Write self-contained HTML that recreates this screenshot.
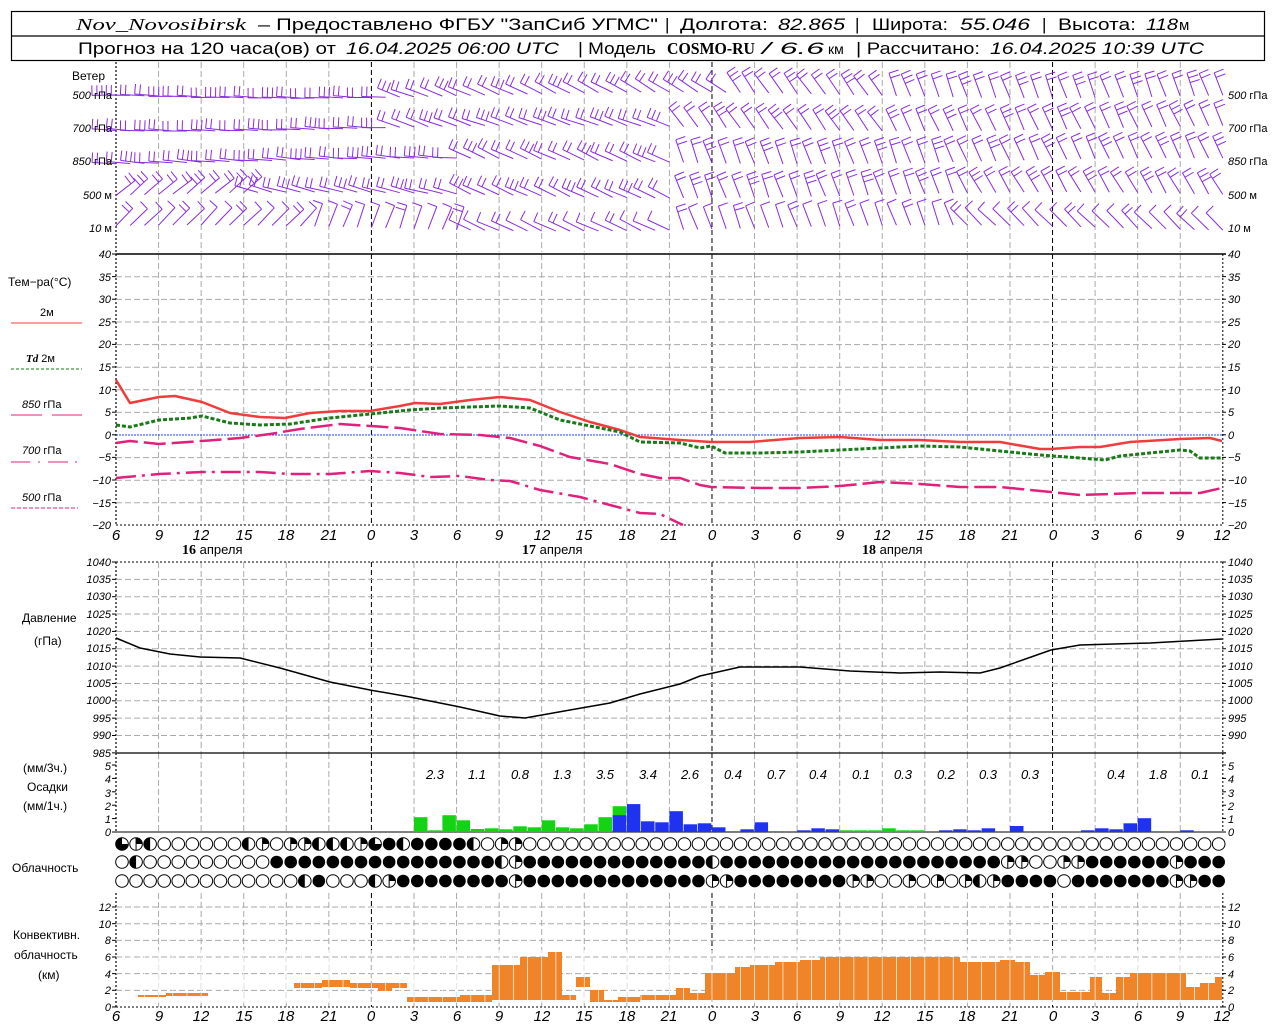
<!DOCTYPE html>
<html><head><meta charset="utf-8"><style>
html,body{margin:0;padding:0;background:#fff;width:1280px;height:1024px;overflow:hidden}
svg{display:block}
text{font-family:"Liberation Sans",sans-serif;fill:#000}
.it{font-style:italic}
.ax{font-size:11px;font-style:italic}
.hx{font-size:15px;font-style:italic}
.lb{font-size:12px}
.pv{font-size:13px;font-style:italic}
</style></head><body>
<svg id="s" width="1280" height="1024" viewBox="0 0 1280 1024" xmlns="http://www.w3.org/2000/svg">
<rect x="0" y="0" width="1280" height="1024" fill="#fff"/>
<g id="grid"></g>
<g id="data"></g>
<!-- header -->
<rect x="11.5" y="11.5" width="1253" height="49" fill="none" stroke="#000" stroke-width="1.2"/>
<line x1="11" y1="36" x2="1265" y2="36" stroke="#000" stroke-width="1.2"/>
<g font-size="17">
<text x="76" y="30" class="it" textLength="170" lengthAdjust="spacingAndGlyphs" style="font-family:'Liberation Serif',serif">Nov_Novosibirsk</text>
<text x="258" y="30" textLength="400" lengthAdjust="spacingAndGlyphs">– Предоставлено ФГБУ "ЗапСиб УГМС"</text>
<text x="665" y="30">|</text>
<text x="680" y="30" textLength="88" lengthAdjust="spacingAndGlyphs">Долгота:</text>
<text x="778" y="30" class="it" textLength="67" lengthAdjust="spacingAndGlyphs">82.865</text>
<text x="855" y="30">|</text>
<text x="872" y="30" textLength="76" lengthAdjust="spacingAndGlyphs">Широта:</text>
<text x="960" y="30" class="it" textLength="70" lengthAdjust="spacingAndGlyphs">55.046</text>
<text x="1042" y="30">|</text>
<text x="1058" y="30" textLength="78" lengthAdjust="spacingAndGlyphs">Высота:</text>
<text x="1146" y="30" class="it" textLength="32" lengthAdjust="spacingAndGlyphs">118</text>
<text x="1179" y="30" font-size="15">м</text>
<text x="78" y="54" textLength="258" lengthAdjust="spacingAndGlyphs">Прогноз на 120 часа(ов) от</text>
<text x="346" y="54" class="it" textLength="213" lengthAdjust="spacingAndGlyphs">16.04.2025 06:00 UTC</text>
<text x="578" y="54" textLength="78" lengthAdjust="spacingAndGlyphs">| Модель</text>
<text x="667" y="54" font-weight="bold" textLength="88" lengthAdjust="spacingAndGlyphs" style="font-family:'Liberation Serif',serif">COSMO-RU</text>
<text x="762" y="54" class="it" textLength="62" lengthAdjust="spacingAndGlyphs">/ 6.6</text>
<text x="828" y="54" font-size="14">км</text>
<text x="856" y="54" textLength="124" lengthAdjust="spacingAndGlyphs">| Рассчитано:</text>
<text x="990" y="54" class="it" textLength="214" lengthAdjust="spacingAndGlyphs">16.04.2025 10:39 UTC</text>
</g>
<!-- wind labels -->
<g class="lb">
<text x="72" y="80">Ветер</text>
<text x="112" y="99" text-anchor="end" font-size="11"><tspan class="it">500</tspan> гПа</text>
<text x="112" y="132" text-anchor="end" font-size="11"><tspan class="it">700</tspan> гПа</text>
<text x="112" y="165" text-anchor="end" font-size="11"><tspan class="it">850</tspan> гПа</text>
<text x="112" y="199" text-anchor="end" font-size="11"><tspan class="it">500</tspan>  м</text>
<text x="112" y="232" text-anchor="end" font-size="11"><tspan class="it">10</tspan>    м</text>
<text x="1228" y="99" font-size="11"><tspan class="it">500</tspan> гПа</text>
<text x="1228" y="132" font-size="11"><tspan class="it">700</tspan> гПа</text>
<text x="1228" y="165" font-size="11"><tspan class="it">850</tspan> гПа</text>
<text x="1228" y="199" font-size="11"><tspan class="it">500</tspan>  м</text>
<text x="1228" y="232" font-size="11"><tspan class="it">10</tspan>    м</text>
</g>
<!-- temp legend -->
<g class="lb">
<text x="8" y="286">Тем−ра(°С)</text>
<text x="40" y="316" font-size="11">2м</text>
<line x1="11" y1="323" x2="82" y2="323" stroke="#f04040" stroke-width="1"/>
<text x="26" y="362" font-size="11"><tspan class="it" font-weight="bold" style="font-family:'Liberation Serif',serif">Td</tspan>   2м</text>
<line x1="11" y1="369" x2="82" y2="369" stroke="#1a7a1a" stroke-width="1" stroke-dasharray="3,2"/>
<text x="22" y="408" font-size="11"><tspan class="it">850</tspan>  гПа</text>
<line x1="11" y1="415" x2="42" y2="415" stroke="#e0207a"/><line x1="52" y1="415" x2="82" y2="415" stroke="#e0207a"/>
<text x="22" y="454" font-size="11"><tspan class="it">700</tspan>  гПа</text>
<line x1="11" y1="462" x2="30" y2="462" stroke="#e0207a"/><line x1="38" y1="462" x2="40" y2="462" stroke="#e0207a"/><line x1="48" y1="462" x2="68" y2="462" stroke="#e0207a"/><line x1="75" y1="462" x2="77" y2="462" stroke="#e0207a"/>
<text x="22" y="501" font-size="11"><tspan class="it">500</tspan>  гПа</text>
<line x1="11" y1="508" x2="78" y2="508" stroke="#e0207a" stroke-dasharray="4,2"/>
</g>
<!-- temp axis labels -->
<g class="ax" text-anchor="end">
<text x="111" y="258">40</text><text x="111" y="281">35</text><text x="111" y="303">30</text><text x="111" y="326">25</text><text x="111" y="348">20</text><text x="111" y="371">15</text><text x="111" y="394">10</text><text x="111" y="416">5</text><text x="111" y="439">0</text><text x="111" y="461">−5</text><text x="111" y="484">−10</text><text x="111" y="507">−15</text><text x="111" y="529">−20</text>
</g>
<g class="ax">
<text x="1228" y="258">40</text><text x="1228" y="281">35</text><text x="1228" y="303">30</text><text x="1228" y="326">25</text><text x="1228" y="348">20</text><text x="1228" y="371">15</text><text x="1228" y="394">10</text><text x="1228" y="416">5</text><text x="1228" y="439">0</text><text x="1228" y="461">−5</text><text x="1228" y="484">−10</text><text x="1228" y="507">−15</text><text x="1228" y="529">−20</text>
</g>
<g class="hx" text-anchor="middle">
<text x="116" y="540">6</text><text x="159" y="540">9</text><text x="201" y="540">12</text><text x="244" y="540">15</text><text x="286" y="540">18</text><text x="329" y="540">21</text><text x="371" y="540">0</text><text x="414" y="540">3</text><text x="457" y="540">6</text><text x="499" y="540">9</text><text x="542" y="540">12</text><text x="584" y="540">15</text><text x="627" y="540">18</text><text x="669" y="540">21</text><text x="712" y="540">0</text><text x="755" y="540">3</text><text x="797" y="540">6</text><text x="840" y="540">9</text><text x="882" y="540">12</text><text x="925" y="540">15</text><text x="967" y="540">18</text><text x="1010" y="540">21</text><text x="1053" y="540">0</text><text x="1095" y="540">3</text><text x="1138" y="540">6</text><text x="1180" y="540">9</text><text x="1222" y="540">12</text>
</g>
<g font-size="13">
<text x="182" y="554"><tspan font-weight="bold" font-size="14" style="font-family:'Liberation Serif',serif">16</tspan> апреля</text>
<text x="522" y="554"><tspan font-weight="bold" font-size="14" style="font-family:'Liberation Serif',serif">17</tspan> апреля</text>
<text x="862" y="554"><tspan font-weight="bold" font-size="14" style="font-family:'Liberation Serif',serif">18</tspan> апреля</text>
</g>
<g class="lb"><text x="22" y="622">Давление</text><text x="34" y="645">(гПа)</text></g>
<g class="ax" font-size="10" text-anchor="end">
<text x="111" y="566">1040</text><text x="111" y="583">1035</text><text x="111" y="600">1030</text><text x="111" y="618">1025</text><text x="111" y="635">1020</text><text x="111" y="652">1015</text><text x="111" y="670">1010</text><text x="111" y="687">1005</text><text x="111" y="704">1000</text><text x="111" y="722">995</text><text x="111" y="739">990</text><text x="111" y="757">985</text>
</g>
<g class="ax" font-size="10">
<text x="1228" y="566">1040</text><text x="1228" y="583">1035</text><text x="1228" y="600">1030</text><text x="1228" y="618">1025</text><text x="1228" y="635">1020</text><text x="1228" y="652">1015</text><text x="1228" y="670">1010</text><text x="1228" y="687">1005</text><text x="1228" y="704">1000</text><text x="1228" y="722">995</text><text x="1228" y="739">990</text>
</g>
<g class="lb"><text x="23" y="772">(мм/3ч.)</text><text x="27" y="791">Осадки</text><text x="23" y="810">(мм/1ч.)</text></g>
<g class="ax" font-size="10" text-anchor="end">
<text x="111" y="770">5</text><text x="111" y="783">4</text><text x="111" y="797">3</text><text x="111" y="810">2</text><text x="111" y="823">1</text><text x="111" y="836">0</text>
</g>
<g class="ax" font-size="10">
<text x="1228" y="770">5</text><text x="1228" y="783">4</text><text x="1228" y="797">3</text><text x="1228" y="810">2</text><text x="1228" y="823">1</text><text x="1228" y="836">0</text>
</g>
<g class="pv" text-anchor="middle">
<text x="435" y="779">2.3</text><text x="477" y="779">1.1</text><text x="520" y="779">0.8</text><text x="562" y="779">1.3</text><text x="605" y="779">3.5</text><text x="648" y="779">3.4</text><text x="690" y="779">2.6</text><text x="733" y="779">0.4</text><text x="776" y="779">0.7</text><text x="818" y="779">0.4</text><text x="861" y="779">0.1</text><text x="903" y="779">0.3</text><text x="946" y="779">0.2</text><text x="988" y="779">0.3</text><text x="1030" y="779">0.3</text><text x="1116" y="779">0.4</text><text x="1158" y="779">1.8</text><text x="1200" y="779">0.1</text>
</g>
<text x="12" y="872" class="lb">Облачность</text>
<g class="lb"><text x="13" y="939">Конвективн.</text><text x="14" y="959">облачность</text><text x="38" y="979">(км)</text></g>
<g class="ax" font-size="10" text-anchor="end">
<text x="111" y="911">12</text><text x="111" y="928">10</text><text x="111" y="944">8</text><text x="111" y="961">6</text><text x="111" y="978">4</text><text x="111" y="994">2</text><text x="111" y="1011">0</text>
</g>
<g class="ax" font-size="10">
<text x="1228" y="911">12</text><text x="1228" y="928">10</text><text x="1228" y="944">8</text><text x="1228" y="961">6</text><text x="1228" y="978">4</text><text x="1228" y="994">2</text><text x="1228" y="1011">0</text>
</g>
<g class="hx" text-anchor="middle">
<text x="116" y="1021">6</text><text x="159" y="1021">9</text><text x="201" y="1021">12</text><text x="244" y="1021">15</text><text x="286" y="1021">18</text><text x="329" y="1021">21</text><text x="371" y="1021">0</text><text x="414" y="1021">3</text><text x="457" y="1021">6</text><text x="499" y="1021">9</text><text x="542" y="1021">12</text><text x="584" y="1021">15</text><text x="627" y="1021">18</text><text x="669" y="1021">21</text><text x="712" y="1021">0</text><text x="755" y="1021">3</text><text x="797" y="1021">6</text><text x="840" y="1021">9</text><text x="882" y="1021">12</text><text x="925" y="1021">15</text><text x="967" y="1021">18</text><text x="1010" y="1021">21</text><text x="1053" y="1021">0</text><text x="1095" y="1021">3</text><text x="1138" y="1021">6</text><text x="1180" y="1021">9</text><text x="1222" y="1021">12</text>
</g>
</svg>
<script>
(function(){
var NS="http://www.w3.org/2000/svg",G=document.getElementById('grid'),D=document.getElementById('data');
function el(p,t,a){var e=document.createElementNS(NS,t);for(var k in a)e.setAttribute(k,a[k]);p.appendChild(e);return e;}
var X0=116,PH=14.19,X1=1222;
function ln(p,x1,y1,x2,y2,c,w,da){var a={x1:x1,y1:y1,x2:x2,y2:y2,stroke:c,'stroke-width':w||1};if(da)a['stroke-dasharray']=da;return el(p,'line',a);}
var panels=[[62,252],[254,525],[562,753],[753,832],[893,1007]];
panels.forEach(function(p,pi){
 for(var k=0;k<=26;k++){var x=X0+k*3*PH;var isDay=(k==6||k==14||k==22);
  if(k==0){ln(G,x,p[0],x,p[1],'#000',1.2,'2,2');continue;}
  if(k==26){ if(pi>0) ln(G,x,p[0],x,p[1],'#000',1,'2,2'); continue;}
  ln(G,x,p[0],x,p[1],isDay?'#000':'#aaa',1,isDay?'5,3':'6,3');}
});
for(var v=35;v>=-15;v-=5){var y=435-(v)*4.52; if(v==0)continue; ln(G,X0,y,X1,y,'#aaa',1,'6,3');}
ln(G,X0,435,X1,435,'#2040ff',1,'2,1');
ln(G,X0,254,X1+4,254,'#000',1.5);ln(G,X0,525,X1,525,'#000',1,'2,2');
for(var p=1035;p>985;p-=5){var y=562+(1040-p)*3.47;ln(G,X0,y,X1,y,'#aaa',1,'6,3');}
ln(G,X0,562,X1,562,'#000',1,'2,2');ln(G,X0,753,X1+4,753,'#000',1.2);
ln(G,X0,832,X1,832,'#000',1);
for(var k=2;k<=12;k+=2){var y=1007-k*8.33;ln(G,X0,y,X1,y,'#aaa',1,'6,3');}
ln(G,X0,1007,X1,1007,'#000',1,'2,2');
function ticks(y0,y1,st){for(var y=y0;y<=y1+0.1;y+=st){ln(G,X0-4,y,X0,y,'#000',1);ln(G,X1,y,X1+4,y,'#000',1);}}
ticks(254,525,22.6);ticks(562,753,17.35);ticks(765,832,13.4);ticks(907,1007,16.66);
function pl(pts,c,w,da){var s=pts.map(function(p){return p.join(',')}).join(' ');var a={points:s,fill:'none',stroke:c,'stroke-width':w,'stroke-linejoin':'round'};if(da)a['stroke-dasharray']=da;el(D,'polyline',a);}
pl([[116,380],[130,403],[159,397],[175,396],[202,402],[230,413],[260,417],[285,418],[310,413],[340,411],[370,411],[400,406],[415,403],[440,404],[470,400],[500,397],[530,400],[560,412],[590,422],[620,430],[640,437],[680,440],[711,442],[750,442],[800,438],[840,437],[880,440],[920,440],[960,442],[1000,442],[1040,449],[1051,449],[1080,447],[1100,447],[1130,442],[1180,439],[1210,438],[1222,441]],'#f03c3c',2.5);
pl([[116,425],[130,427],[159,420],[190,418],[202,416],[230,423],[260,425],[290,424],[330,418],[370,414],[410,410],[440,408],[470,407],[500,406],[530,408],[560,420],[590,426],[620,432],[640,442],[680,443],[700,448],[711,446],[725,453],[760,453],[800,452],[840,450],[880,448],[920,446],[960,447],[1000,451],[1040,455],[1080,458],[1105,460],[1120,456],[1180,450],[1190,451],[1200,458],[1222,458]],'#1a7a1a',3,'4,2');
pl([[116,443],[130,441],[159,444],[202,441],[240,438],[270,434],[300,429],[340,424],[370,426],[400,428],[440,434],[480,435],[510,438],[540,446],[570,457],[610,464],[640,474],[660,478],[680,478],[700,485],[711,487],[760,488],[800,488],[840,486],[880,482],[920,484],[960,487],[1000,487],[1051,492],[1080,495],[1110,494],[1140,493],[1200,493],[1222,488]],'#e0207a',2.5,'22,6');
pl([[116,478],[159,474],[202,472],[260,472],[290,474],[330,474],[370,471],[400,473],[430,477],[460,476],[490,480],[510,481],[540,490],[580,497],[610,505],[640,513],[660,514],[683,525]],'#e0207a',2.5,'20,6,3,6');
pl([[116,638],[140,648],[170,654],[200,657],[240,658],[280,668],[330,682],[370,690],[410,697],[460,707],[500,716],[525,718],[570,710],[610,703],[640,694],[680,684],[700,676],[740,667],[800,667],[850,671],[900,673],[940,672],[980,673],[1000,668],[1051,650],[1080,645],[1150,643],[1222,639]],'#000',1.5);
var g=[14.8,1.7,16.8,11.7,3,3.7,2.7,5.7,4.7,11.7,4.7,3.7,7.7,14.8,25.8];
g.forEach(function(h,i){var x=414+i*PH;el(D,'rect',{x:x,y:832-h,width:13.5,height:h,fill:'#14d214'});});
el(D,'rect',{x:414+14*PH,y:832-16.8,width:13.5,height:16.8,fill:'#1e32f0'});
var b={15:27.9,16:10.7,17:9.7,18:20.8,19:7.7,20:8.7,21:4.7,22:0.7,23:2.7,24:9.7,25:0.7,27:1.7,28:3.7,29:2.7,35:1,37:1.7,38:2.7,39:1.7,40:3.7,42:6,47:1.7,48:3.7,49:2.7,50:8.7,51:13.8,52:0.7,54:1.7};
for(var i in b){var x=414+i*PH;el(D,'rect',{x:x,y:832-b[i],width:13.5,height:b[i],fill:'#1e32f0'});}
var gg={30:1.7,31:1.7,32:1.7,33:3.7,34:1.7,35:1.7};
for(var i in gg){var x=414+i*PH;el(D,'rect',{x:x,y:832-gg[i],width:13.5,height:gg[i],fill:'#14d214'});}
var r1="31200000021011222134244442"+"0110"; r1=r1+Array(80).join('0');
var r2="02000000000"+"4444444444444444"+"21"+"4444444444444"+"2"+"44444444444444444444"+"1100114444441444";
var r3="0000000000000240002144444444"+"1"+"4444444444444"+"11"+"44444444"+"11001010121"+"4444"+"0"+"4444444"+"11"+"444"+"1"+"4444";
var rows=[[r1,844],[r2,862],[r3,881]];
rows.forEach(function(R){var s=R[0],y=R[1];
 for(var i=0;i<79;i++){var cx=122+i*14.06,r=6.3,t=+(s[i]||0);
  if(t==4){el(D,'circle',{cx:cx,cy:y,r:r,fill:'#000'});continue;}
  el(D,'circle',{cx:cx,cy:y,r:r,fill:'#fff',stroke:'#000','stroke-width':1});
  if(t==2){el(D,'path',{d:'M'+cx+','+(y-r)+' A'+r+','+r+' 0 0 0 '+cx+','+(y+r)+' Z',fill:'#000'});}
  if(t==1){el(D,'path',{d:'M'+cx+','+y+' L'+cx+','+(y-r)+' A'+r+','+r+' 0 0 1 '+(cx+r)+','+y+' Z',fill:'#000'});ln(D,cx,y-r,cx,y+r,'#000',1);}
  if(t==3){el(D,'path',{d:'M'+cx+','+y+' L'+cx+','+(y-r)+' A'+r+','+r+' 0 1 0 '+(cx+r)+','+y+' Z',fill:'#000'});}
 }});
var cv=[[138,166,995,997],[166,208,993,996],[294,322,983,988],[322,350,980,987],[350,378,983,988],[378,392,983,991],[392,407,983,988],[407,460,997,1002],[460,492,995,1002],[492,520,965,1000],[520,548,957,1000],[548,562,952,1000],[562,576,995,1000],[576,590,977,987],[590,604,990,1002],[604,618,1000,1002],[618,640,997,1002],[640,676,995,1000],[676,690,988,1000],[690,705,993,1000],[705,735,973,1000],[735,750,967,1000],[750,775,965,1000],[775,800,962,1000],[800,820,960,1000],[820,960,957,1000],[960,1000,962,1000],[1000,1015,960,1000],[1015,1030,962,1000],[1030,1045,975,1000],[1045,1060,972,1000],[1060,1090,992,1000],[1090,1102,977,1000],[1102,1116,993,1000],[1116,1130,977,1000],[1130,1186,973,1000],[1186,1200,987,1000],[1200,1215,983,1000],[1215,1222,977,1000]];
cv.forEach(function(c){el(D,'rect',{x:c[0],y:c[2],width:c[1]-c[0],height:c[3]-c[2],fill:'#f08428'});});
for(var x=X0+14.19;x<X1;x+=14.19){ln(D,x,950,x,1003,'#fff',0.7);}
// wind barbs
var levels=[95,128,161,195,228];
function ang(L,i){var base;
 if(L==0){base=i<20?182:i<44?200+(i-20)*0.6:i<55?235:250;}
 else if(L==1){base=i<20?183:i<40?200:i<55?235:245;}
 else if(L==2){base=i<25?185:i<40?205:i<60?250:245;}
 else if(L==3){base=i<10?320:i<25?195:i<40?205:i<60?250:240;}
 else {base=i<14?315:i<25?290:i<40?205:i<60?250:225;}
 return (base+((i*37+L*11)%7-3))*Math.PI/180;}
function spd(L,i){return [2,2,2,2,1][L]+((i+L)%4==0?1:0);}
var P='#8a2be2';
levels.forEach(function(y0,L){
 for(var i=0;i<79;i++){var x=X0+i*PH;var a=ang(L,i),dx=Math.cos(a),dy=Math.sin(a),len=24;
  var y=y0+Math.sin(i*0.12+L)*3;
  var tx=x+dx*len,ty=y+dy*len;ln(D,x,y,tx,ty,P,1);
  var fx=-dy,fy=dx; if(fy>0){fx=-fx;fy=-fy;}
  var n=spd(L,i);
  for(var k=0;k<n;k++){var sx=tx-dx*k*5,sy=ty-dy*k*5;ln(D,sx,sy,sx+fx*10,sy+fy*10,P,1);}
 }});
})();
</script>
</body></html>
